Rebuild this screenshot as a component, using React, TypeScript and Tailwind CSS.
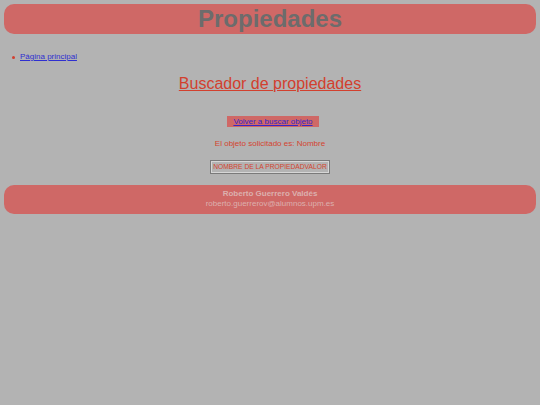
import React from "react";

const font = { fontFamily: '"Liberation Sans", Arial, sans-serif' };

export default function App() {
  return (
    <div
      className="min-h-screen w-full bg-[#b3b3b3] pt-[4px] px-[4px] text-[#d23f2f]"
      style={font}
    >
      {/* Header */}
      <header className="h-[30px] rounded-[10px] bg-[#cf6866] flex items-center justify-center">
        <h1 className="text-[24px] leading-none font-bold text-[#6c6c6c]">Propiedades</h1>
      </header>

      {/* Nav */}
      <ul className="mt-[18px] pl-[8px]">
        <li className="flex items-center h-[10px] gap-[5px]">
          <span className="w-[3px] h-[3px] rounded-full bg-[#d23f2f]" />
          <a href="#" className="text-[8px] leading-[10px] text-[#2f2fd0] underline">
            Página principal
          </a>
        </li>
      </ul>

      <main className="flex flex-col items-center">
        <h2 className="mt-[13px] text-[16px] leading-[18px] underline text-[#d2402e]">
          Buscador de propiedades
        </h2>

        <a
          href="#"
          className="mt-[23px] ml-[6px] h-[11px] px-[6px] bg-[#cf6866] text-[8px] leading-[11px] text-[#3527c8] underline"
        >
          Volver a buscar objeto
        </a>

        <p className="mt-[12px] text-[8px] leading-[10px] text-[#d4432f]">
          El objeto solicitado es: Nombre
        </p>

        <div className="mt-[11px] border border-[#7a7a7a]">
          <table className="border border-[#d6d6d6]">
            <tbody>
              <tr className="text-[6.7px] leading-[10px] font-normal text-[#d4432f]">
                <th className="font-normal pl-[1px]">NOMBRE DE LA PROPIEDAD</th>
                <th className="font-normal pr-[1px]">VALOR</th>
              </tr>
            </tbody>
          </table>
        </div>
      </main>

      {/* Footer */}
      <footer className="mt-[11px] h-[29px] rounded-[10px] bg-[#cf6866] flex flex-col items-center pt-[4px] text-[#dcb0ae]">
        <span className="text-[8px] leading-[10px] font-bold">Roberto Guerrero Valdés</span>
        <span className="text-[8px] leading-[10px]">roberto.guerrerov@alumnos.upm.es</span>
      </footer>
    </div>
  );
}
